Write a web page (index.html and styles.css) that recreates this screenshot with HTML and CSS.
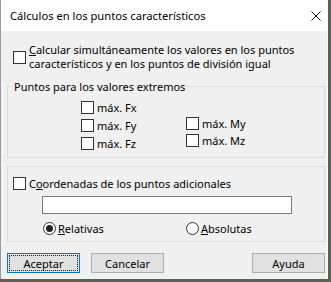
FILE: index.html
```html
<!DOCTYPE html>
<html lang="es">
<head>
<meta charset="utf-8">
<title>Cálculos en los puntos característicos</title>
<link rel="stylesheet" href="styles.css">
</head>
<body>
<div class="screen">
  <div class="dialog">
    <div class="titlebar">
      <span class="title">Cálculos en los puntos característicos</span>
      <span class="close">
        <svg width="10" height="10" viewBox="0 0 10 10"><path d="M0.5 0.5 L9.5 9.5 M9.5 0.5 L0.5 9.5" stroke="#111" stroke-width="1" fill="none"/></svg>
      </span>
    </div>
    <div class="content">
      <div class="check-main">
        <span class="box"></span>
        <span class="label"><span class="line"><u>C</u>alcular simultáneamente los valores en los puntos</span><span class="line">característicos y en los puntos de división igual</span></span>
      </div>
      <fieldset class="group extremes">
        <legend>Puntos para los valores extremos</legend>
        <div class="cols">
          <div class="col col-f">
            <div class="check"><span class="box"></span><span>máx. Fx</span></div>
            <div class="check"><span class="box"></span><span>máx. Fy</span></div>
            <div class="check"><span class="box"></span><span>máx. Fz</span></div>
          </div>
          <div class="col col-m">
            <div class="check"><span class="box"></span><span>máx. My</span></div>
            <div class="check"><span class="box"></span><span>máx. Mz</span></div>
          </div>
        </div>
      </fieldset>
      <div class="group coords">
        <div class="check"><span class="box"></span><span>C<u>o</u>ordenadas de los puntos adicionales</span></div>
        <div class="input"></div>
        <div class="radios">
          <div class="radio first"><span class="circle on"></span><span><u>R</u>elativas</span></div>
          <div class="radio"><span class="circle"></span><span><u>A</u>bsolutas</span></div>
        </div>
      </div>
      <div class="buttons">
        <div class="btn default"><span class="focus">Aceptar</span></div>
        <div class="btn">Cancelar</div>
        <div class="btn help">Ayuda</div>
      </div>
    </div>
  </div>
</div>
</body>
</html>
```
FILE: styles.css
```css
* { box-sizing: border-box; }
html, body { margin: 0; padding: 0; }
body {
  width: 331px;
  height: 282px;
  overflow: hidden;
  background: #5b6057;
  font-family: "Segoe UI", "Noto Sans", "Liberation Sans", Arial, sans-serif;
  font-size: 11px;
  color: #000;
}
.screen {
  width: 331px;
  height: 282px;
  display: flex;
  align-items: flex-start;
}
.dialog {
  width: 328px;
  height: 279px;
  background: #f0f0f0;
  border-left: 1px solid #9a9a9a;
  border-right: 1px solid #fafafa;
  display: flex;
  flex-direction: column;
}
.titlebar {
  height: 31px;
  background: #fff;
  display: flex;
  align-items: center;
  padding-left: 9px;
  flex-shrink: 0;
}
.title { flex: 1; font-size: 11.2px; line-height: 16px; }
.close {
  width: 10px;
  height: 10px;
  display: flex;
  margin-right: 6px;
}
.content {
  padding: 12px 2px 0 6px;
  line-height: 13px;
}
.box {
  width: 13px;
  height: 13px;
  border: 1px solid #333;
  background: #fff;
  flex-shrink: 0;
}
.check-main {
  display: flex;
  align-items: center;
  gap: 3px;
  padding-left: 6px;
}
.label {
  display: flex;
  flex-direction: column;
}
.line { line-height: 14px; }
.check {
  display: flex;
  align-items: center;
  gap: 3px;
  height: 13px;
}
.group {
  border: 1px solid #dcdcdc;
  margin: 0;
}
fieldset.extremes {
  margin-top: 9px;
  padding: 8px 0 7px 0;
  min-width: 0;
}
legend {
  padding: 0 2px;
  margin-left: 4px;
  line-height: 13px;
}
.cols {
  display: grid;
  grid-template-columns: 105px auto;
  padding-left: 73px;
}
.col { display: flex; flex-direction: column; }
.col-f { gap: 5px; }
.col-m { gap: 4px; padding-top: 16px; }
.coords {
  margin-top: 8px;
  padding: 10px 0 6px 5px;
}
.input {
  margin: 6px 0 0 29px;
  width: 250px;
  height: 18px;
  background: #fff;
  border: 1px solid #7a7a7a;
}
.radios {
  display: flex;
  margin: 8px 0 0 30px;
}
.radio {
  display: flex;
  align-items: center;
  gap: 2px;
  height: 13px;
}
.radio.first { width: 143px; }
.circle {
  width: 13px;
  height: 13px;
  border: 1px solid #333;
  border-radius: 50%;
  background: #fff;
  display: flex;
  align-items: center;
  justify-content: center;
  flex-shrink: 0;
}
.circle.on::after {
  content: "";
  width: 7px;
  height: 7px;
  border-radius: 50%;
  background: #222;
}
.buttons {
  display: flex;
  gap: 11px;
  margin-top: 11px;
}
.btn {
  width: 73px;
  height: 20px;
  background: #e1e1e1;
  border: 1px solid #adadad;
  display: flex;
  align-items: center;
  justify-content: center;
  line-height: 13px;
}
.btn.default {
  border: 1px solid #0078d7;
  padding: 1px;
}
.focus {
  flex: 1;
  align-self: stretch;
  display: flex;
  align-items: center;
  justify-content: center;
  border: 1px dotted #222;
}
.btn.help { margin-left: auto; }
```
